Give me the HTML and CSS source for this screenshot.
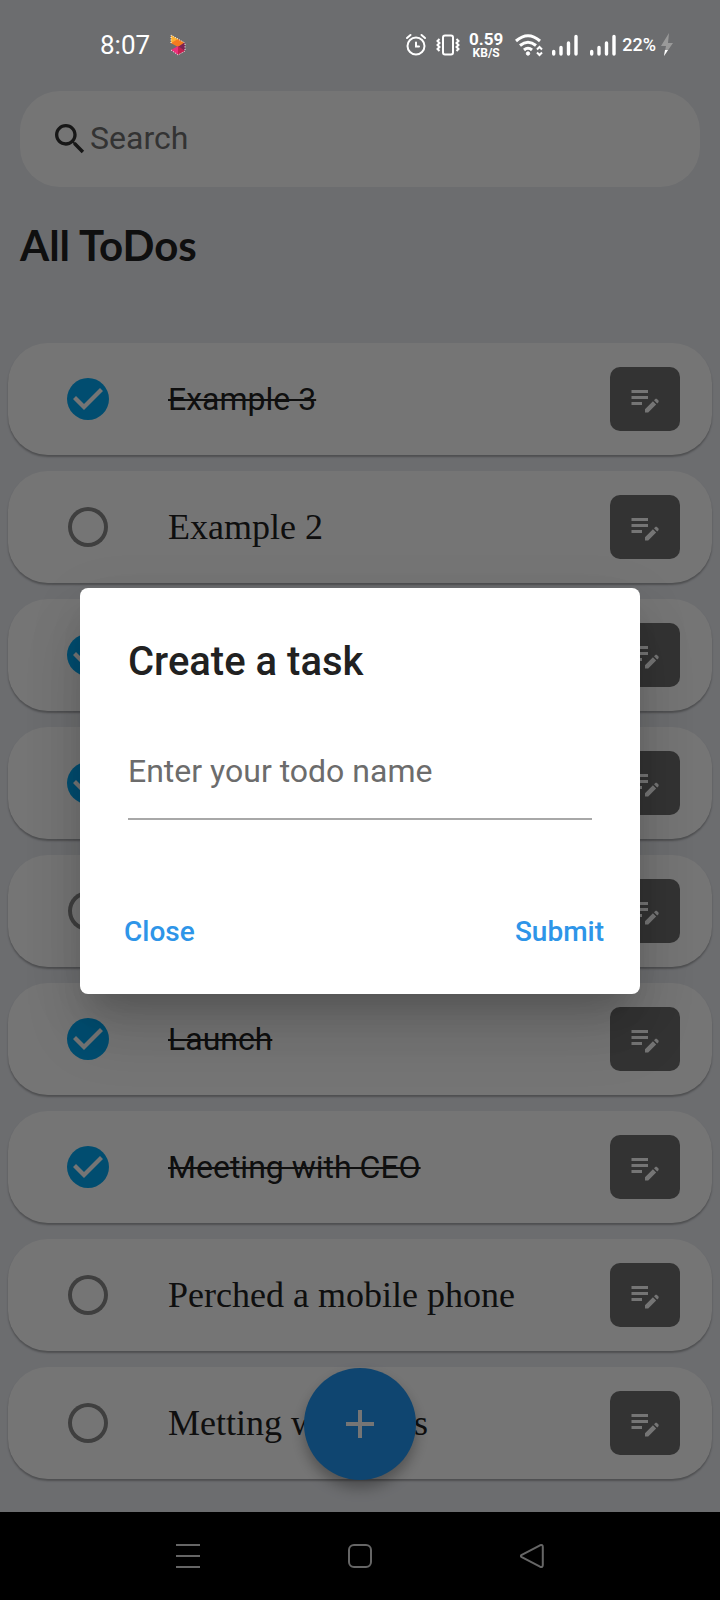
FILE: index.html
```html
<!DOCTYPE html>
<html lang="en">
<head>
<meta charset="utf-8">
<meta name="viewport" content="width=device-width, initial-scale=1">
<title>All ToDos</title>
<link rel="stylesheet" href="styles.css">
</head>
<body>
<svg class="defs" aria-hidden="true">
  <symbol id="edit-note" viewBox="0 0 24 24"><path d="M3 10h11v2H3v-2zm0-2h11V6H3v2zm0 8h7v-2H3v2zm15.01-3.13l.71-.71c.39-.39 1.02-.39 1.41 0l.71.71c.39.39.39 1.02 0 1.41l-.71.71-2.12-2.12zm-.71.71l-5.3 5.3V21h2.12l5.3-5.3-2.12-2.12z"/></symbol>
  <symbol id="signal" viewBox="0 0 26 22"><path d="M1.7 17.500v2.500M9 13.500v6.500M16.500 9v11M24 2.500v17.500" fill="none" stroke="currentColor" stroke-width="3.400" stroke-linecap="round"/></symbol>
</svg>
<div class="screen">
  <header class="status">
    <div class="status-group">
      <time class="clock">8:07</time>
      <svg class="app-badge" width="16" height="22" viewBox="0 0 16 22" aria-hidden="true">
        <path d="M1 1l7 4v7L1 9z" fill="#fbb034"/><path d="M8 5l7 4-7 4-7-4z" fill="#f47b20"/><path d="M15 8v9l-7-4z" fill="#7b2452"/><path d="M1 16l7-4v9z" fill="#ec2f7b"/><path d="M8 12l7 5-7 4z" fill="#c4204f"/>
        <path d="M1 9V1l14 8v8l-7 4-7-5" fill="none" stroke="#fff" stroke-width="1" stroke-dasharray="1 1.500"/>
      </svg>
    </div>
    <div class="status-group status-icons">
      <svg width="22" height="24" viewBox="0 0 22 24" fill="none" stroke="currentColor" stroke-width="2" stroke-linecap="round" aria-hidden="true"><circle cx="11" cy="13" r="8.500"/><path d="M11 9.500V13.500h3M2 5l3.500-3M20 5l-3.500-3"/></svg>
      <svg width="24" height="24" viewBox="0 0 24 24" fill="none" stroke="currentColor" stroke-width="2" aria-hidden="true"><rect x="7" y="2.500" width="10" height="19" rx="2"/><path d="M3.500 6l-2 2 2 2-2 2 2 2-2 2 2 2M20.500 6l2 2-2 2 2 2-2 2 2 2-2 2"/></svg>
      <div class="speed"><span class="rate">0.59</span><span class="unit">KB/S</span></div>
      <svg class="wifi" width="28" height="24" viewBox="0 0 28 24" fill="none" stroke="currentColor" stroke-width="3" aria-hidden="true"><path d="M1 8Q13 -2.500 25 8M5 12.500Q13 6 21 12.500M9 17Q13 13.500 17 17"/><circle cx="13" cy="20.500" r="1.700" fill="currentColor" stroke-width="1"/><path d="M22 16.500l2.500-2.500 2.500 2.500M22 19.500l2.500 2.500 2.500-2.500" stroke-width="2"/></svg>
      <svg class="signal" width="26" height="22" aria-hidden="true"><use href="#signal"/></svg>
      <svg class="signal" width="26" height="22" aria-hidden="true"><use href="#signal"/></svg>
      <div class="battery"><span>22%</span><svg width="14" height="24" viewBox="0 0 14 24" aria-hidden="true"><path d="M9 0L1 13h5L4 23l9-13H8z" fill="#999"/><path d="M5 17h3l-4 6z" fill="#fff"/></svg></div>
    </div>
  </header>

  <main class="page">
    <label class="search">
      <svg width="40" height="40" viewBox="0 0 24 24" fill="#333" aria-hidden="true"><path d="M15.500 14h-.79l-.28-.27C15.410 12.590 16 11.110 16 9.500 16 5.910 13.090 3 9.500 3S3 5.910 3 9.500 5.910 16 9.500 16c1.610 0 3.090-.59 4.230-1.570l.27.28v.79l5 4.990L20.490 19l-4.990-5zm-6 0C7.010 14 5 11.990 5 9.500S7.010 5 9.500 5 14 7.010 14 9.500 11.990 14 9.500 14z"/></svg>
      <input type="search" placeholder="Search" aria-label="Search">
    </label>
    <h1 class="heading">All ToDos</h1>
    <ul class="todos">
      <li class="todo"><input class="check" type="checkbox" id="t1" checked><label class="name" for="t1">Example 3</label><button class="edit" type="button" aria-label="Edit"><svg><use href="#edit-note"/></svg></button></li>
      <li class="todo"><input class="check" type="checkbox" id="t2"><label class="name" for="t2">Example 2</label><button class="edit" type="button" aria-label="Edit"><svg><use href="#edit-note"/></svg></button></li>
      <li class="todo"><input class="check" type="checkbox" id="t3" aria-label="Task" checked><label class="name" for="t3"></label><button class="edit" type="button" aria-label="Edit"><svg><use href="#edit-note"/></svg></button></li>
      <li class="todo"><input class="check" type="checkbox" id="t4" aria-label="Task" checked><label class="name" for="t4"></label><button class="edit" type="button" aria-label="Edit"><svg><use href="#edit-note"/></svg></button></li>
      <li class="todo"><input class="check" type="checkbox" id="t5" aria-label="Task"><label class="name" for="t5"></label><button class="edit" type="button" aria-label="Edit"><svg><use href="#edit-note"/></svg></button></li>
      <li class="todo"><input class="check" type="checkbox" id="t6" checked><label class="name" for="t6">Launch</label><button class="edit" type="button" aria-label="Edit"><svg><use href="#edit-note"/></svg></button></li>
      <li class="todo"><input class="check" type="checkbox" id="t7" checked><label class="name" for="t7">Meeting with CEO</label><button class="edit" type="button" aria-label="Edit"><svg><use href="#edit-note"/></svg></button></li>
      <li class="todo"><input class="check" type="checkbox" id="t8"><label class="name" for="t8">Perched a mobile phone</label><button class="edit" type="button" aria-label="Edit"><svg><use href="#edit-note"/></svg></button></li>
      <li class="todo"><input class="check" type="checkbox" id="t9"><label class="name" for="t9">Metting with boss</label><button class="edit" type="button" aria-label="Edit"><svg><use href="#edit-note"/></svg></button></li>
    </ul>
    <button class="fab" type="button" aria-label="Add task"><svg width="48" height="48" viewBox="0 0 24 24" fill="#fff"><path d="M19 13h-6v6h-2v-6H5v-2h6V5h2v6h6v2z"/></svg></button>
  </main>

  <div class="scrim">
    <form class="dialog" role="dialog" aria-labelledby="dialog-title">
      <h2 class="dialog-title" id="dialog-title">Create a task</h2>
      <input class="field" type="text" placeholder="Enter your todo name" aria-label="Enter your todo name">
      <div class="actions">
        <button class="action" type="button">Close</button>
        <button class="action" type="button">Submit</button>
      </div>
    </form>
  </div>
</div>

<nav class="navbar">
  <button type="button" aria-label="Recent apps"><svg width="24" height="24" viewBox="0 0 24 24"><path d="M0 1h24M0 12h24M0 23h24"/></svg></button>
  <button type="button" aria-label="Home"><svg width="24" height="24" viewBox="0 0 24 24"><rect x="1" y="1" width="22" height="22" rx="5"/></svg></button>
  <button type="button" aria-label="Back"><svg width="24" height="24" viewBox="0 0 24 24"><path d="M1.800 10.800L20 1.300Q22.800 .3 22.800 3V21Q22.800 23.700 20 22.700L1.800 13.200Q-.2 12 1.800 10.800z"/></svg></button>
</nav>
</body>
</html>
```

FILE: styles.css
```css
* { box-sizing: border-box; }

body {
  margin: 0;
  min-height: 100vh;
  display: flex;
  flex-direction: column;
  background: #000;
  font-family: Roboto, "Liberation Sans", sans-serif;
  color: #212121;
}

button, input { font: inherit; }
button { border: 0; padding: 0; cursor: pointer; }
.defs { position: absolute; width: 0; height: 0; }

.screen {
  position: relative;
  flex: 1;
  background: #ebedf2;
}

/* status bar */
.status {
  position: relative;
  z-index: 2;
  display: flex;
  justify-content: space-between;
  align-items: center;
  height: 91px;
  padding: 0 46px 2px 100px;
  color: #fff;
}
.status-group { display: flex; align-items: center; gap: 20px; }
.status-icons { gap: 9px; }
.clock { font-size: 26px; }
.speed { display: flex; flex-direction: column; align-items: center; font-weight: 700; }
.rate { font-size: 17px; line-height: 16px; }
.unit { font-size: 12px; line-height: 12px; }
.wifi { margin-left: 3px; }
.signal + .signal { margin-left: 3px; }
.battery { display: flex; align-items: center; gap: 4px; margin-left: -3px; font-size: 18px; font-weight: 500; }

/* list page */
.search {
  display: flex;
  align-items: center;
  height: 96px;
  margin: 0 20px;
  padding: 0 30px;
  border-radius: 40px;
  background: #fff;
}
.search input {
  flex: 1;
  min-width: 0;
  padding: 0 0 2px;
  border: 0;
  outline: 0;
  background: none;
  font-size: 32px;
}
.search input::placeholder { color: #707070; opacity: 1; }

.heading {
  margin: 28px 20px 68px;
  font: 700 42px/60px Lato, sans-serif;
}

.todos {
  display: flex;
  flex-direction: column;
  gap: 16px;
  margin: 0;
  padding: 0 8px 33px;
  list-style: none;
}
.todo {
  display: flex;
  align-items: center;
  height: 112px;
  padding: 0 32px 0 59px;
  border-radius: 40px;
  background: #fff;
  box-shadow: 0 2px 2px rgba(0, 0, 0, 0.28);
}
.check {
  appearance: none;
  flex: none;
  width: 42px;
  height: 42px;
  margin: 0;
  border: 1px solid transparent;
  border-radius: 50%;
}
.check:not(:checked) { box-shadow: inset 0 0 0 4px #8a8a8a; background: none; }
.check:checked { border: 0; background: #03a9f4; }
.check:checked::before {
  content: "";
  display: block;
  width: 42px;
  height: 42px;
  background: #fff;
  clip-path: polygon(6px 21px, 9px 18px, 17px 26px, 33px 10px, 36px 13px, 17px 32px);
}
.name {
  flex: 1;
  margin-left: 59px;
  font: 36px/40px "Liberation Serif", serif;
}
.check:checked + .name {
  font: 32px/40px Roboto, sans-serif;
  text-decoration: line-through;
  text-decoration-thickness: 2px;
}
.edit {
  display: grid;
  place-items: center;
  width: 70px;
  height: 64px;
  border-radius: 10px;
  background: #707070;
}
.edit svg { width: 36px; height: 36px; fill: #fff; }

.fab {
  position: absolute;
  left: 50%;
  bottom: 32px;
  display: grid;
  place-items: center;
  width: 112px;
  height: 112px;
  margin-left: -56px;
  border-radius: 50%;
  background: #2196f3;
  box-shadow: 0 8px 14px rgba(0, 0, 0, 0.3);
}

/* dialog */
.scrim {
  position: absolute;
  inset: 0;
  z-index: 1;
  display: flex;
  align-items: center;
  justify-content: center;
  padding: 70px 80px 0;
  background: rgba(0, 0, 0, 0.54);
}
.dialog {
  flex: 1;
  padding: 50px 48px 31px;
  border-radius: 8px;
  background: #fff;
  box-shadow: 0 22px 30px -14px rgba(0, 0, 0, 0.16), 0 40px 60px 0 rgba(0, 0, 0, 0.12), 0 14px 60px 4px rgba(0, 0, 0, 0.06);
}
.dialog-title { margin: 0 0 38px; font-size: 40px; line-height: 48px; font-weight: 500; }
.field {
  display: block;
  width: 100%;
  height: 96px;
  padding: 0;
  border: 0;
  border-bottom: 2px solid #a8a8a8;
  border-radius: 0;
  outline: 0;
  font-size: 32px;
}
.field::placeholder { color: #6c6c6c; opacity: 1; }
.actions { display: flex; justify-content: space-between; margin: 79px -12px 0 -4px; }
.action { height: 64px; background: none; color: #2e95e8; font-size: 28px; font-weight: 500; }

/* system navigation */
.navbar {
  display: flex;
  justify-content: center;
  align-items: center;
  gap: 148px;
  height: 88px;
  background: #000;
}
.navbar button { display: block; height: 24px; background: none; }
.navbar svg { display: block; fill: none; stroke: #666; stroke-width: 2; }
```
